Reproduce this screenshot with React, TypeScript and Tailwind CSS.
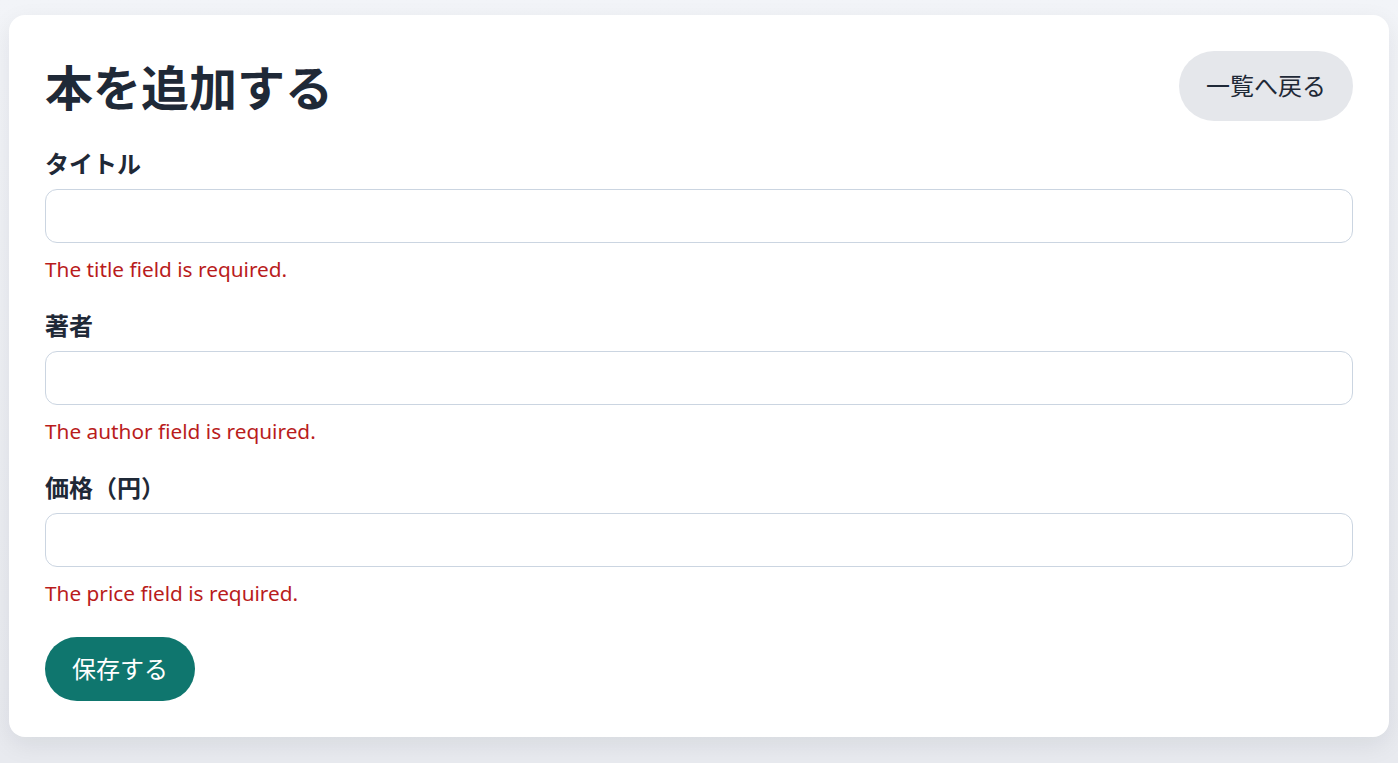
import React from 'react';

const font = { fontFamily: '"Noto Sans", "Noto Sans CJK JP", sans-serif' };

const fields = [
  { label: 'タイトル', error: 'The title field is required.' },
  { label: '著者', error: 'The author field is required.' },
  { label: '価格（円）', error: 'The price field is required.' },
];

export default function App() {
  return (
    <div
      className="min-h-[763px] bg-gradient-to-b from-[#f2f4f8] to-[#e8eaef] px-[9px] pt-[15px] pb-[26px]"
      style={font}
    >
      <div className="rounded-2xl bg-white p-9 shadow-[0_8px_24px_rgba(15,23,42,0.08)]">
        {/* Header */}
        <div className="mb-[28px] flex h-[70px] items-center justify-between">
          <h1 className="pt-[3px] text-[48px] font-bold leading-none text-[#1f2937]">本を追加する</h1>
          <button className="h-[70px] rounded-full bg-[#e5e7eb] px-[27px] text-[24px] text-[#1f2937]">
            一覧へ戻る
          </button>
        </div>

        {/* Fields */}
        <div className="flex flex-col gap-[27px]">
          {fields.map((f) => (
            <div key={f.label}>
              <label className="mb-[10px] block text-[24px] font-bold leading-[30px] text-[#1f2937]">
                {f.label}
              </label>
              <input
                type="text"
                className="block h-[54px] w-full rounded-xl border border-[#cbd5e1] bg-white px-4 text-[20px] outline-none"
              />
              <p className="mt-[11px] text-[20.8px] leading-[30px] text-[#b91c1c]">{f.error}</p>
            </div>
          ))}
        </div>

        <button className="mt-[29px] h-[64px] rounded-full bg-[#0f766e] px-[27px] text-[24px] text-white">
          保存する
        </button>
      </div>
    </div>
  );
}
